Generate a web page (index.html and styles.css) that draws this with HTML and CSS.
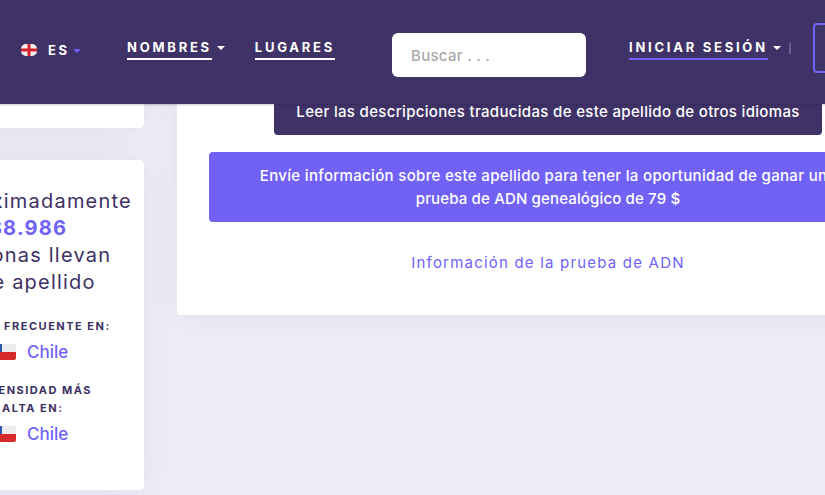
FILE: index.html
```html
<!DOCTYPE html>
<html lang="es">
<head>
<meta charset="utf-8">
<title>Apellido</title>
<link rel="stylesheet" href="styles.css">
</head>
<body>
<header class="topbar">
  <div class="lang">
    <svg class="lang-flag" width="16" height="12" viewBox="0 0 16 12"><rect width="16" height="12" rx="5" fill="#f1eff0"/><rect x="6.5" width="3" height="12" fill="#d8202f"/><rect y="4.5" width="16" height="3" fill="#d8202f"/></svg>
    <span class="lang-code">ES</span>
    <span class="caret caret-purple"></span>
  </div>
  <nav class="nav">
    <div class="nav-item"><a class="nav-link">NOMBRES</a><span class="caret"></span></div>
    <div class="nav-item"><a class="nav-link">LUGARES</a></div>
  </nav>
  <div class="search">Buscar . . .</div>
  <div class="nav-item login"><a class="nav-link nav-link-purple">INICIAR SESIÓN</a><span class="caret"></span></div>
  <span class="divider"></span>
  <div class="outline-btn"></div>
</header>
<div class="page">
  <aside class="side">
    <div class="card card-top"></div>
    <div class="card card-stats">
      <div class="lead">
        <div class="lead-first">Aproximadamente</div>
        <strong class="num">88.986</strong>
        <div>personas llevan</div>
        <div>este apellido</div>
      </div>
      <h4 class="stat-label stat-first">MÁS FRECUENTE EN:</h4>
      <div class="place">
        <svg class="flag" width="22" height="16" viewBox="0 0 22 16"><rect width="22" height="16" rx="2" fill="#ececec"/><path d="M0 8h22v6a2 2 0 0 1-2 2H2a2 2 0 0 1-2-2z" fill="#d72b2b"/><path d="M2 0h6v8H0V2a2 2 0 0 1 2-2z" fill="#2a55a8"/></svg>
        <span>Chile</span>
      </div>
      <h4 class="stat-label stat-second">DENSIDAD MÁS<br><span class="indent">ALTA EN:</span></h4>
      <div class="place">
        <svg class="flag" width="22" height="16" viewBox="0 0 22 16"><rect width="22" height="16" rx="2" fill="#ececec"/><path d="M0 8h22v6a2 2 0 0 1-2 2H2a2 2 0 0 1-2-2z" fill="#d72b2b"/><path d="M2 0h6v8H0V2a2 2 0 0 1 2-2z" fill="#2a55a8"/></svg>
        <span>Chile</span>
      </div>
    </div>
  </aside>
  <main class="main-card">
    <a class="btn btn-dark">Leer las descripciones traducidas de este apellido de otros idiomas</a>
    <a class="btn btn-purple">Envíe información sobre este apellido para tener la oportunidad de ganar una<br><span class="btn-line-two">prueba de ADN genealógico de 79 $</span></a>
    <a class="dna-link">Información de la prueba de ADN</a>
  </main>
</div>
</body>
</html>
```
FILE: styles.css
```css
* { box-sizing: border-box; }
html, body { margin: 0; height: 495px; overflow: hidden; }
body {
  background: #eeedf6;
  font-family: "Inter", "Liberation Sans", sans-serif;
  color: #3d3163;
  position: relative;
}
.topbar {
  position: absolute;
  top: 0; left: 0;
  width: 1000px;
  height: 104px;
  background: #3f3266;
  display: flex;
  align-items: center;
  padding-left: 21px;
  color: #fff;
  box-shadow: 0 1px 2px rgba(40, 30, 80, .25);
  z-index: 2;
}
.lang { display: flex; align-items: center; margin-top: -4px; width: 106px; }
.lang-flag { display: block; }
.lang-code { font-size: 13px; font-weight: 700; letter-spacing: 2.6px; margin-left: 11px; }
.caret {
  width: 0; height: 0;
  border: 4px solid transparent;
  border-top: 4px solid #fff;
  border-bottom: 0;
  margin-left: 5px;
}
.caret-purple { border-top-color: #7162f5; margin-top: 2px; margin-left: 3px; }
.nav { display: flex; gap: 30px; width: 265px; }
.nav-item { display: flex; align-items: center; margin-top: -18px; }
.nav-item .caret { margin-top: 10px; }
.nav-link {
  font-size: 13px;
  font-weight: 700;
  letter-spacing: 2.75px;
  line-height: 16px;
  padding-bottom: 3px;
  border-bottom: 2px solid #fff;
  margin-top: 12px;
  white-space: nowrap;
}
.nav-link-purple { border-bottom-color: #7162f5; }
.search {
  width: 194px;
  height: 44px;
  margin-top: 6px;
  background: #fff;
  border-radius: 6px;
  color: #aaa;
  font-size: 15px;
  font-weight: 500;
  letter-spacing: .3px;
  line-height: 46px;
  padding-left: 19px;
}
.login { margin-left: 43px; }
.divider { width: 2px; height: 11px; background: #6a5f8c; margin-left: 8px; margin-top: -8px; }
.outline-btn {
  width: 120px; height: 50px;
  margin-left: 22px;
  margin-top: -8px;
  flex: none;
  border: 2px solid #7162f5;
  border-radius: 4px;
}
.page {
  display: flex;
  align-items: flex-start;
  gap: 33px;
  margin-left: -56px;
  width: 1000px;
}
.side { width: 200px; flex: none; }
.card {
  background: #fff;
  border-radius: 4px;
  box-shadow: 0 0 30px rgba(70, 60, 140, .09);
}
.card-top { height: 128px; margin-bottom: 32px; }
.card-stats { height: 330px; padding-top: 28px; }
.lead { margin: 0 0 0 -29px; font-size: 20px; line-height: 27px; letter-spacing: 1.2px; white-space: nowrap; text-align: center; width: 226px; }
.lead-first { margin-left: 18px; }
.num { color: #7162f5; font-weight: 700; }
.stat-label { margin: 0 0 0 26px; font-size: 11px; font-weight: 700; line-height: 18px; letter-spacing: 1.5px; white-space: nowrap; }
.stat-first { margin-top: 21px; }
.stat-second { margin-top: 19px; margin-left: 45px; }
.indent { margin-left: 13px; }
.place { display: flex; align-items: center; gap: 11px; font-size: 17px; font-weight: 500; color: #7162f5; margin: 7px 0 0 50px; }
.flag { display: block; }
.main-card {
  width: 742px;
  height: 255px;
  margin-top: 60px;
  flex: none;
  background: #fff;
  border-radius: 4px;
  box-shadow: 0 0 30px rgba(70, 60, 140, .09);
  padding: 28px 32px 0;
  display: flex;
  flex-direction: column;
  align-items: center;
}
.btn { display: block; border-radius: 4px; color: #fff; text-align: center; font-size: 15px; font-weight: 500; line-height: 23px; letter-spacing: .33px; white-space: nowrap; }
.btn-dark { width: 548px; height: 47px; background: #3f3266; padding-top: 12px; }
.btn-purple { width: 678px; height: 70px; margin-top: 17px; background: #7162f5; padding-top: 12px; }
.btn-line-two { letter-spacing: .15px; }
.dna-link { margin-top: 31px; color: #7162f5; font-size: 15px; line-height: 20px; letter-spacing: 1.2px; }
```
